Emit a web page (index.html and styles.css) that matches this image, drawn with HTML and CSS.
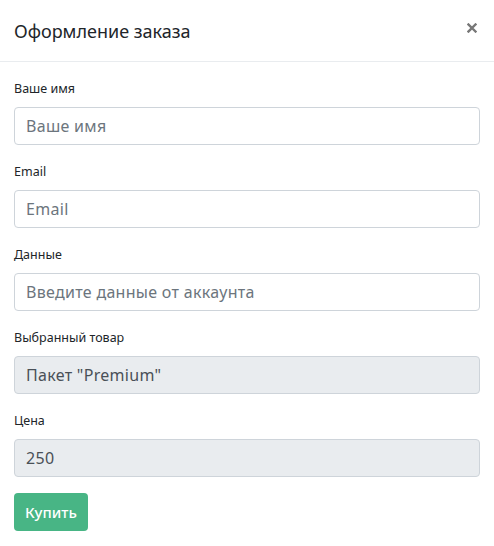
FILE: index.html
```html
<!DOCTYPE html>
<html lang="ru">
<head>
<meta charset="utf-8">
<title>Оформление заказа</title>
<link rel="stylesheet" href="styles.css">
</head>
<body>
<div class="modal">
  <div class="modal-header">
    <h5 class="modal-title">Оформление заказа</h5>
    <button class="close" type="button" aria-label="Close">
      <svg width="10" height="10" viewBox="0 0 10 10"><path d="M1.5 1.5 L8.5 8.5 M8.5 1.5 L1.5 8.5" stroke="#777" stroke-width="2.4" stroke-linecap="square"/></svg>
    </button>
  </div>
  <form class="modal-body">
    <div class="form-group">
      <label>Ваше имя</label>
      <input class="form-control" type="text" placeholder="Ваше имя">
    </div>
    <div class="form-group">
      <label>Email</label>
      <input class="form-control" type="email" placeholder="Email">
    </div>
    <div class="form-group">
      <label>Данные</label>
      <input class="form-control" type="text" placeholder="Введите данные от аккаунта">
    </div>
    <div class="form-group">
      <label>Выбранный товар</label>
      <input class="form-control" type="text" value='Пакет "Premium"' disabled>
    </div>
    <div class="form-group">
      <label>Цена</label>
      <input class="form-control" type="text" value="250" disabled>
    </div>
    <button class="btn-buy" type="button">Купить</button>
  </form>
</div>
</body>
</html>
```

FILE: styles.css
```css
* { box-sizing: border-box; }
html, body {
  margin: 0;
  padding: 0;
  background: #fff;
}
body {
  font-family: "Noto Sans", "Open Sans", sans-serif;
  color: #212529;
  font-size: 14px;
  line-height: 1.5;
}
.modal {
  width: 494px;
  background: #fff;
}
.modal-header {
  display: flex;
  align-items: center;
  justify-content: space-between;
  padding: 16px 14px 15px 14px;
  border-bottom: 1px solid #e9ecef;
  height: 62px;
}
.modal-title {
  margin: 0;
  font-size: 18px;
  font-weight: 400;
  line-height: 30px;
  color: #212529;
}
.close {
  border: 0;
  background: transparent;
  padding: 0;
  margin: 0 3px 6px 0;
  width: 10px;
  height: 10px;
  display: flex;
  cursor: pointer;
}
.modal-body {
  padding: 16px 14px;
  display: flex;
  flex-direction: column;
  align-items: flex-start;
}
.form-group {
  width: 100%;
  margin-bottom: 16px;
  display: flex;
  flex-direction: column;
}
.form-group label {
  font-size: 12.5px;
  line-height: 21px;
  margin-bottom: 8px;
  color: #212529;
}
.form-control {
  width: 100%;
  height: 38px;
  padding: 6px 11px;
  font-family: inherit;
  font-size: 16px;
  letter-spacing: 0.3px;
  line-height: 24px;
  color: #495057;
  background: #fff;
  border: 1px solid #ced4da;
  border-radius: 4px;
}
.form-control::placeholder {
  color: #6c757d;
  opacity: 1;
}
.form-control:disabled {
  background: #e9ecef;
  color: #495057;
  opacity: 1;
}
.btn-buy {
  height: 38px;
  width: 74px;
  padding: 0;
  border: 0;
  border-radius: 4px;
  background: #48b585;
  color: #fff;
  font-family: inherit;
  font-size: 15px;
  font-weight: 500;
  cursor: pointer;
}
```
